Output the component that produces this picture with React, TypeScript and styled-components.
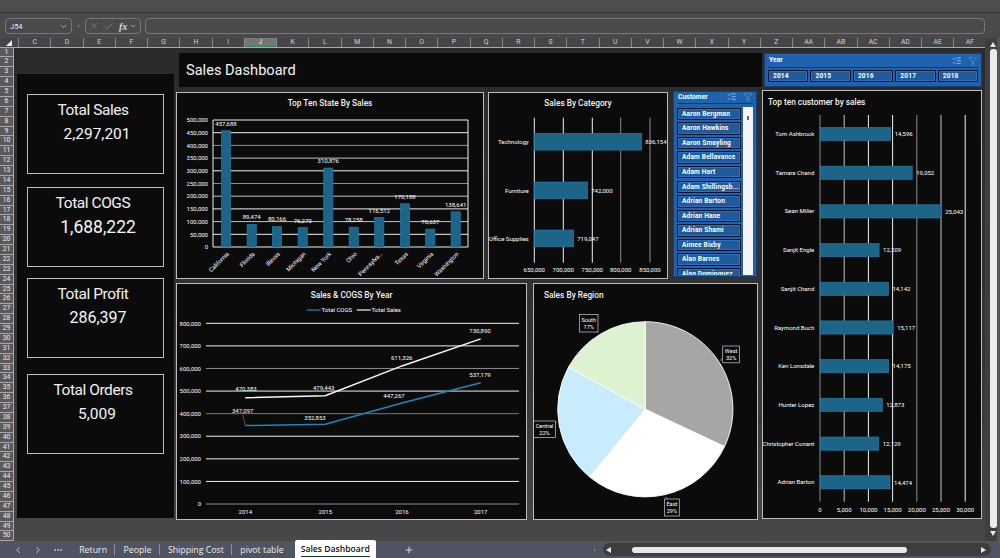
import React from "react";
import styled, { createGlobalStyle } from "styled-components";
import { X, Check, ChevronDown, ChevronLeft, ChevronRight, Ellipsis, EllipsisVertical, Plus, ListChecks, FunnelX } from "lucide-react";

const Global = createGlobalStyle`
  html, body { margin: 0; padding: 0; background: #484848; }
  #root { width: 1000px; height: 558px; overflow: hidden; }
  * { box-sizing: border-box; }
`;
const FONT = `Roboto, "Liberation Sans", sans-serif`;

const Page = styled.div`
  width: 1000px; height: 558px; display: flex; flex-direction: column;
  font-family: ${FONT}; color: #fff; background: #4a4a4c;
`;
const TitleStrip = styled.div`height: 13px; background: #4d4e50; border-bottom: 1px solid #333;`;
const FormulaBar = styled.div`
  height: 25px; display: flex; align-items: center; gap: 4px; padding: 1px 15px 0 5px; background: #4a4a4c;
`;
const FieldBox = styled.div<{ $w?: number }>`
  height: 16px; border: 1px solid #777779; border-radius: 4px; display: flex; align-items: center;
  ${p => (p.$w ? `width:${p.$w}px;` : "flex:1;")} color: #ccc;
`;
const NameText = styled.span`flex: 1; padding-left: 4px; font-size: 7.5px; color: #eee;`;
const Fx = styled.span`font: italic bold 10px "Liberation Serif", serif; color: #ddd; margin-left: 5px;`;
const Grip = styled.div`width: 3px; display: flex; justify-content: center; align-items: center; margin: 0 1px; color: #ddd;`;

const Body = styled.div`flex: 1; display: flex; min-height: 0;`;
const GridArea = styled.div`width: 985px; flex: none; display: flex; flex-direction: column;`;
const ColHeader = styled.div`
  height: 9.5px; display: flex; background: #464648; border-bottom: 1px solid #aaa; font-size: 6.8px; color: #d4d4d4; overflow: hidden;
`;
const Corner = styled.div`
  width: 19px; flex: none; position: relative; border-right: 1px solid #888;
  &::after { content: ""; position: absolute; right: 6px; bottom: 1px; border-left: 6px solid transparent; border-bottom: 6px solid #eee; }
`;
const ColCell = styled.div<{ $on?: boolean }>`
  width: 32.25px; flex: none; text-align: center; line-height: 9px; border-right: 1px solid #8a8a8a;
  ${p => p.$on ? "background:#767676;color:#eee;box-shadow: inset 0 -1px 0 #2e8b57;" : ""}
`;
const GridBody = styled.div`flex: 1; display: flex; min-height: 0;`;
const RowHeads = styled.div`width: 14px; flex: none; display: flex; flex-direction: column; background: #5a5a5c;`;
const RowCell = styled.div`
  flex: 1; min-height: 0; font-size: 6.8px; line-height: 9px; text-align: center; color: #eee;
  border-bottom: 1px solid #a8a8a8; border-right: 1px solid #a8a8a8;
`;
const Sheet = styled.div`
  flex: 1; display: flex; padding: 5.5px 3px 0 3px; overflow: hidden;
  background: linear-gradient(#2b2b2b, #333 60%, #484848);
`;
const LeftPanel = styled.div`
  width: 157px; flex: none; height: 444px; margin: 21px 2px 0 0; padding: 0 10px; background: #0b0b0b; display: flex; flex-direction: column;
`;
const KpiCard = styled.div<{ $mt: number }>`
  height: 80px; flex: none; margin-top: ${p => p.$mt}px; border: 1px solid #bdbdbd; display: flex; flex-direction: column; padding-top: 6px;
`;
const KpiLabel = styled.div`
  font-size: 15.5px; line-height: 18px; text-align: center; letter-spacing: -0.45px; padding-right: 5px; color: #f2f2f2;
`;
const KpiValue = styled.div<{ $dx: number; $size: number }>`
  font-size: ${p => p.$size}px; line-height: 20px; margin-top: 5px; text-align: center; padding-left: ${p => p.$dx}px; color: #f6f6f6;
`;
const CenterCol = styled.div`width: 586px; flex: none; display: flex; flex-direction: column;`;
const TitleBar = styled.div`
  height: 34px; flex: none; margin-left: 3px; padding-left: 7px; background: #0b0b0b; display: flex; align-items: center;
  font-size: 14.6px; color: #f4f4f4;
`;
const ChartRow = styled.div<{ $mt: number }>`display: flex; margin-top: ${p => p.$mt}px; align-items: flex-start;`;
const Panel = styled.div<{ $w: number; $h: number; $ml?: number; $mt?: number }>`
  width: ${p => p.$w}px; height: ${p => p.$h}px; margin-left: ${p => p.$ml || 0}px; margin-top: ${p => p.$mt || 0}px; flex: none;
  border: 1px solid #bcbcbc; background: #0b0b0b; display: flex; flex-direction: column;
`;
const ChartTitle = styled.div<{ $h: number; $left?: number }>`
  height: ${p => p.$h}px; flex: none; line-height: ${p => p.$h}px; font-size: 8.3px; font-weight: 500; color: #f2f2f2;
  ${p => (p.$left ? `padding-left:${p.$left}px;` : "text-align:center;")}
`;
const Chart = styled.svg`
  flex: 1; min-height: 0; display: block; width: 100%;
  font-family: ${FONT}; font-size: 6px; fill: #fff;
`;
const RightCol = styled.div`width: 220px; flex: none; display: flex; flex-direction: column;`;

const Slicer = styled.div`background: #1f62ad; border: 1px solid #173f6e; color: #fff; font-weight: 700; font-size: 6.8px;`;
const YearSlicer = styled(Slicer)`height: 34px; flex: none; width: 218px; margin-left: 2px; padding: 0 3px;`;
const CustomerSlicer = styled(Slicer)`width: 84px; flex: none; height: 186.5px; margin: -1.3px 0 0 5px; padding: 0 3px;`;
const SlicerHead = styled.div<{ $h: number }>`
  height: ${p => p.$h}px; display: flex; align-items: center; justify-content: space-between; border-bottom: 1px solid #123a68; padding-left: 1px;
`;
const SlicerTools = styled.div`display: flex; gap: 6px; align-items: center; margin-right: 1px; color: #d8e6f5;`;
const YearRow = styled.div`display: flex; gap: 2.3px; margin-top: 2.5px;`;
const SlicerBtn = styled.div`
  height: 12.4px; flex: 1; background: #1f5a9a; border: 1px solid #0a1426; box-shadow: inset 0 0 0 1px #2a6fc0;
  line-height: 10.4px; padding-left: 4px; white-space: nowrap; overflow: hidden; letter-spacing: 0.15px; font-size: 6.6px;
`;
const SlicerBody = styled.div`display: flex; gap: 1.5px; height: 168px; margin-top: 3px;`;
const SlicerList = styled.div`width: 64px; overflow: hidden; display: flex; flex-direction: column; gap: 2.2px; padding-top: 1px;`;
const ListBtn = styled(SlicerBtn)`flex: none; padding-left: 4px;`;
const SlicerScroll = styled.div`
  width: 10px; background: #f4f4f6; position: relative;
  &::after { content: ""; position: absolute; left: 4px; top: 9px; width: 2px; height: 4px; background: #666; }
`;

const VScroll = styled.div`
  width: 15px; flex: none; background: #3e3e40; display: flex; flex-direction: column; align-items: center; padding: 3px 0 0 4px;
  border-right: 3px solid #555;
`;
const Thumb = styled.div`width: 7px; height: 479px; flex: none; margin: 2px 0; background: #ececec; border-radius: 3px;`;
const TabBar = styled.div`
  height: 17px; flex: none; display: flex; align-items: stretch; background: #505462; font-family: "Open Sans", sans-serif; font-size: 8.8px; color: #ececec;
`;
const TabNav = styled.div`width: 71px; flex: none; display: flex; align-items: center; gap: 10px; padding-left: 13px; color: #ddd;`;
const Tab = styled.div<{ $sep?: boolean; $mr?: number }>`
  padding: 0 8.2px; margin-right: ${p => p.$mr || 0}px; display: flex; align-items: center; white-space: nowrap;
  position: relative;
  ${p => p.$sep ? `&::after{content:"";position:absolute;right:0;top:3px;bottom:3px;width:1px;background:#8b8e99;}` : ""}
`;
const ActiveTab = styled.div`
  width: 81px; flex: none; margin-top: -1px; background: #fff; color: #111; font-weight: 600; display: flex; align-items: center; justify-content: center;
  white-space: nowrap; position: relative; border-radius: 2px 2px 0 0; font-size: 8.6px;
  &::after{content:"";position:absolute;left:6px;right:6px;bottom:1px;height:1px;background:#0d3b22;}
`;
const AddTab = styled.div`width: 16px; margin-left: 25px; display: flex; align-items: center; justify-content: center; color: #eee;`;
const TabSpacer = styled.div`flex: 1;`;
const HScroll = styled.div`
  width: 388px; flex: none; margin: 2px 9px 2px 6px; background: #3e3e40; border-radius: 7px; display: flex; align-items: center; padding: 0 3px; gap: 0;
`;
const HThumb = styled.div`width: 275px; height: 6px; margin: 0 73px 0 20px; background: #e8e8e8; border-radius: 3px;`;

const Tri = ({ d }: { d: "u" | "d" | "l" | "r" }) => {
  const pts = { u: "0,6 6,6 3,1", d: "0,1 6,1 3,6", l: "5,0 5,6 0,3", r: "1,0 1,6 6,3" }[d];
  return <svg width="6" height="6" viewBox="0 0 6 6" style={{ flex: "none" }}><polygon points={pts} fill="#e8e8e8" /></svg>;
};

const cols = "C D E F G H I J K L M N O P Q R S T U V W X Y Z AA AB AC AD AE AF".split(" ");
const rows = Array.from({ length: 50 }, (_, i) => i + 1);
const fmt = (n: number) => n.toLocaleString("en-US");
const W = "#f0f0f0", G = "#8c8c8c", M = "#c4c4c4";

const BAR = "#1c6488", BARE = "#2781b0";

const states: [string, number, number, number][] = [
  ["California", 457688, 226, 124], ["Florida", 89474, 251.7, 217.3], ["Illinois", 80166, 277, 219.3],
  ["Michigan", 76270, 302.7, 220.7], ["New York", 310876, 328.3, 161], ["Ohio", 78258, 353.7, 220],
  ["Pennsylva…", 116512, 379.3, 211], ["Texas", 170188, 405, 196.7], ["Virginia", 70637, 430.3, 222], ["Washington", 138641, 455.7, 205],
];
const stateGrid = [W, W, G, M, W, G, M, W, M, W, W];

const StateChart = () => (
  <Chart viewBox="177 113 306 165">
    {stateGrid.map((c, i) => {
      const y = 120 + i * 12.7;
      return <g key={i}>
        <line x1={213} x2={468} y1={y} y2={y} stroke={c} strokeWidth={1} />
        <text x={208} y={y + 2.2} textAnchor="end">{fmt(500000 - i * 50000)}</text>
      </g>;
    })}
    <line x1={213} x2={213} y1={120} y2={247} stroke={W} strokeWidth={1} />
    <line x1={468} x2={468} y1={120} y2={247} stroke={W} strokeWidth={1} />
    {states.map(([n, v, cx, ly]) => {
      const h = (v / 500000) * 127;
      return <g key={n}>
        <rect x={cx - 4.6} y={247 - h} width={9.2} height={h} fill={BAR} stroke={BARE} strokeWidth={0.6} />
        <text x={cx} y={ly + 2} textAnchor="middle">{fmt(v)}</text>
        <text transform={`translate(${cx + 2} 253) rotate(-45)`} textAnchor="end" y={2}>{n}</text>
      </g>;
    })}
  </Chart>
);

const catGrid: [number, string, string][] = [[534.3, W, "650,000"], [563.3, W, "700,000"], [592.3, W, "750,000"], [620.7, G, "800,000"], [650, G, "850,000"]];
const cats: [string, number, number, string][] = [
  ["Technology", 133.3, 641.7, "836,154"], ["Furniture", 182, 587.7, "742,000"], ["Office Supplies", 230, 573.7, "719,047"],
];
const CategoryChart = () => (
  <Chart viewBox="489 113 178 165">
    {catGrid.map(([x, c, t]) => <g key={x}>
      <line x1={x} x2={x} y1={117.7} y2={262.7} stroke={c} strokeWidth={1} />
      <text x={x} y={272} textAnchor="middle">{t}</text>
    </g>)}
    {cats.map(([n, y, x2, v]) => <g key={n}>
      <rect x={534.3} y={y} width={x2 - 534.3} height={16.8} fill={BAR} stroke={BARE} strokeWidth={0.6} />
      <text x={528.7} y={y + 10.5} textAnchor="end">{n}</text>
      <text x={x2 + 3.5} y={y + 10.5}>{v}</text>
    </g>)}
  </Chart>
);

const lineGrid = [W, W, G, W, "#777", W, W, W, G];
const xs = [245.3, 325.3, 402, 480.7];
const yv = (v: number) => 504 - (v / 800000) * 180.7;
const sales = [470383, 479443, 611326, 730890];
const cogs = [347097, 352853, 447267, 537179];
const salesLbl = [[246, 389], [323.7, 387.7], [401.7, 357.7], [480, 330.7]];
const cogsLbl = [[242.7, 411], [315, 417.7], [394, 395.7], [480, 374.3]];
const LineChart = () => (
  <Chart viewBox="177 306 349 213">
    <line x1={306.7} x2={320.7} y1={310} y2={310} stroke="#1f86c0" strokeWidth={1.2} />
    <text x={321.5} y={312}>Total COGS</text>
    <line x1={356.7} x2={370.7} y1={310} y2={310} stroke="#f2f7ee" strokeWidth={1.2} />
    <text x={371.5} y={312}>Total Sales</text>
    {lineGrid.map((c, i) => {
      const y = 323.3 + i * 22.59;
      return <g key={i}>
        <line x1={206} x2={519} y1={y} y2={y} stroke={c} strokeWidth={1} />
        <text x={201} y={y + 2.2} textAnchor="end">{fmt(800000 - i * 100000)}</text>
      </g>;
    })}
    {xs.map((x, i) => <text key={x} x={x} y={513.8} textAnchor="middle">{2014 + i}</text>)}
    <line x1={242.7} y1={415} x2={245.3} y2={425.5} stroke="#999" strokeWidth={0.5} />
    <polyline points={xs.map((x, i) => `${x},${yv(cogs[i])}`).join(" ")} fill="none" stroke="#1f86c0" strokeWidth={1.5} />
    <polyline points={xs.map((x, i) => `${x},${yv(sales[i])}`).join(" ")} fill="none" stroke="#f6faf2" strokeWidth={1.5} />
    {sales.map((v, i) => <text key={v} x={salesLbl[i][0]} y={salesLbl[i][1] + 2.2} textAnchor="middle">{fmt(v)}</text>)}
    {cogs.map((v, i) => <text key={v} x={cogsLbl[i][0]} y={cogsLbl[i][1] + 2.2} textAnchor="middle">{fmt(v)}</text>)}
  </Chart>
);

const CX = 645.3, CY = 409.3, R = 87.6;
const slices: [number, string][] = [[32, "#a6a6a6"], [29, "#ffffff"], [22, "#c9ecfd"], [17, "#dcf2d0"]];
const pt = (pct: number) => {
  const a = (pct / 100) * 2 * Math.PI;
  return [CX + R * Math.sin(a), CY - R * Math.cos(a)];
};
const callouts: [string, string, number, number, number, number, string][] = [
  ["South", "17%", 579.5, 314.5, 18.5, 17.5, "597,331 598,333"],
  ["West", "32%", 722.7, 346, 16.8, 16.8, "722,358 720,361"],
  ["Central", "22%", 533.5, 421, 22, 16.5, "555,423 557,422"],
  ["East", "29%", 664.5, 499, 14.8, 17, "668,499 665,497"],
];
const PieChart = () => {
  let acc = 0;
  return (
    <Chart viewBox="534 306 223 213">
      {slices.map(([p, c]) => {
        const [x1, y1] = pt(acc);
        const [x2, y2] = pt(acc + p);
        const d = `M${CX} ${CY} L${x1} ${y1} A${R} ${R} 0 ${p > 50 ? 1 : 0} 1 ${x2} ${y2} Z`;
        acc += p;
        return <path key={c} d={d} fill={c} stroke="#fff" strokeWidth={0.9} />;
      })}
      {callouts.map(([n, v, x, y, w, h, lead]) => <g key={n}>
        <polyline points={lead} fill="none" stroke="#ccc" strokeWidth={0.5} />
        <rect x={x} y={y} width={w} height={h} fill="#0b0b0b" stroke="#ccc" strokeWidth={0.7} />
        <text x={x + w / 2} y={y + 7} textAnchor="middle" fontSize={5.6}>{n}</text>
        <text x={x + w / 2} y={y + 14.2} textAnchor="middle" fontSize={5.6}>{v}</text>
      </g>)}
    </Chart>
  );
};

const customers: [string, number][] = [
  ["Tom Ashbrook", 14596], ["Tamara Chand", 19052], ["Sean Miller", 25043], ["Sanjit Engle", 12209], ["Sanjit Chand", 14142],
  ["Raymond Buch", 15117], ["Ken Lonsdale", 14175], ["Hunter Lopez", 12873], ["Christopher Conant", 12129], ["Adrian Barton", 14474],
];
const custGrid = [G, M, W, W, G, M, W];
const CustomerChart = () => (
  <Chart viewBox="763 113 218 405">
    {custGrid.map((c, i) => {
      const x = 820 + i * 24.2;
      return <g key={i}>
        <line x1={x} x2={x} y1={115} y2={501.7} stroke={c} strokeWidth={1} />
        <text x={x} y={512} textAnchor="middle">{fmt(i * 5000)}</text>
      </g>;
    })}
    {customers.map(([n, v], i) => {
      const cy = 134 + i * 38.7;
      const w = (v / 5000) * 24.2;
      return <g key={n}>
        <rect x={820} y={cy - 6.6} width={w} height={13.2} fill={BAR} stroke={BARE} strokeWidth={0.6} />
        <text x={814.3} y={cy + 2} textAnchor="end">{n}</text>
        <text x={820 + w + 4} y={cy + 2.2}>{fmt(v)}</text>
      </g>;
    })}
  </Chart>
);

const kpis = [
  { label: "Total Sales", value: "2,297,201", mt: 20, vdx: 3, size: 15.5 },
  { label: "Total COGS", value: "1,688,222", mt: 13, vdx: 5, size: 17.5 },
  { label: "Total Profit", value: "286,397", mt: 11, vdx: 5, size: 16 },
  { label: "Total Orders", value: "5,009", mt: 16, vdx: 3, size: 15.5 },
];
const names = ["Aaron Bergman", "Aaron Hawkins", "Aaron Smayling", "Adam Bellavance", "Adam Hart", "Adam Shillingsb...", "Adrian Barton", "Adrian Hane", "Adrian Shami", "Aimee Bixby", "Alan Barnes", "Alan Dominguez"];
const Tools = () => (
  <SlicerTools>
    <ListChecks size={9.5} strokeWidth={1.6} />
    <FunnelX size={9.5} strokeWidth={1.4} color="#7fa6d0" />
  </SlicerTools>
);

export default function App() {
  return (
    <Page>
      <Global />
      <TitleStrip />
      <FormulaBar>
        <FieldBox $w={67}><NameText>J54</NameText><ChevronDown size={9} style={{ marginRight: 3 }} /></FieldBox>
        <Grip><EllipsisVertical size={10} /></Grip>
        <FieldBox $w={56}>
          <X size={10} strokeWidth={1.2} color="#999" style={{ marginLeft: 3 }} />
          <Check size={11} strokeWidth={1.2} color="#999" style={{ marginLeft: 4 }} />
          <Fx>fx</Fx>
          <ChevronDown size={8} style={{ marginLeft: 2 }} />
        </FieldBox>
        <FieldBox />
      </FormulaBar>
      <Body>
        <GridArea>
          <ColHeader>
            <Corner />
            {cols.map(c => <ColCell key={c} $on={c === "J"}>{c}</ColCell>)}
          </ColHeader>
          <GridBody>
            <RowHeads>{rows.map(r => <RowCell key={r}>{r}</RowCell>)}</RowHeads>
            <Sheet>
              <LeftPanel>
                {kpis.map(k => (
                  <KpiCard key={k.label} $mt={k.mt}>
                    <KpiLabel>{k.label}</KpiLabel>
                    <KpiValue $dx={k.vdx} $size={k.size}>{k.value}</KpiValue>
                  </KpiCard>
                ))}
              </LeftPanel>
              <CenterCol>
                <TitleBar>Sales Dashboard</TitleBar>
                <ChartRow $mt={5}>
                  <Panel $w={308} $h={187}><ChartTitle $h={20}>Top Ten State By Sales</ChartTitle><StateChart /></Panel>
                  <Panel $w={180} $h={187} $ml={4}><ChartTitle $h={20}>Sales By Category</ChartTitle><CategoryChart /></Panel>
                  <CustomerSlicer>
                    <SlicerHead $h={12}>Customer<Tools /></SlicerHead>
                    <SlicerBody>
                      <SlicerList>{names.map(n => <ListBtn key={n}>{n}</ListBtn>)}</SlicerList>
                      <SlicerScroll />
                    </SlicerBody>
                  </CustomerSlicer>
                </ChartRow>
                <ChartRow $mt={4}>
                  <Panel $w={351} $h={237}><ChartTitle $h={22}>Sales &amp; COGS By Year</ChartTitle><LineChart /></Panel>
                  <Panel $w={225} $h={237} $ml={6}><ChartTitle $h={22} $left={10}>Sales By Region</ChartTitle><PieChart /></Panel>
                </ChartRow>
              </CenterCol>
              <RightCol>
                <YearSlicer>
                  <SlicerHead $h={13.5}>Year<Tools /></SlicerHead>
                  <YearRow>{[2014, 2015, 2016, 2017, 2018].map(y => <SlicerBtn key={y}>{y}</SlicerBtn>)}</YearRow>
                </YearSlicer>
                <Panel $w={220} $h={429} $mt={3}>
                  <ChartTitle $h={22} $left={5}>Top ten customer by sales</ChartTitle>
                  <CustomerChart />
                </Panel>
              </RightCol>
            </Sheet>
          </GridBody>
        </GridArea>
        <VScroll><Tri d="u" /><Thumb /><Tri d="d" /></VScroll>
      </Body>
      <TabBar>
        <TabNav>
          <ChevronLeft size={10} /><ChevronRight size={10} /><Ellipsis size={10} />
        </TabNav>
        <Tab $sep>Return</Tab>
        <Tab $sep>People</Tab>
        <Tab $sep>Shipping Cost</Tab>
        <Tab $mr={3}>pivot table</Tab>
        <ActiveTab>Sales Dashboard</ActiveTab>
        <AddTab><Plus size={10} /></AddTab>
        <TabSpacer />
        <Grip><EllipsisVertical size={10} /></Grip>
        <HScroll><Tri d="l" /><HThumb /><Tri d="r" /></HScroll>
      </TabBar>
    </Page>
  );
}
